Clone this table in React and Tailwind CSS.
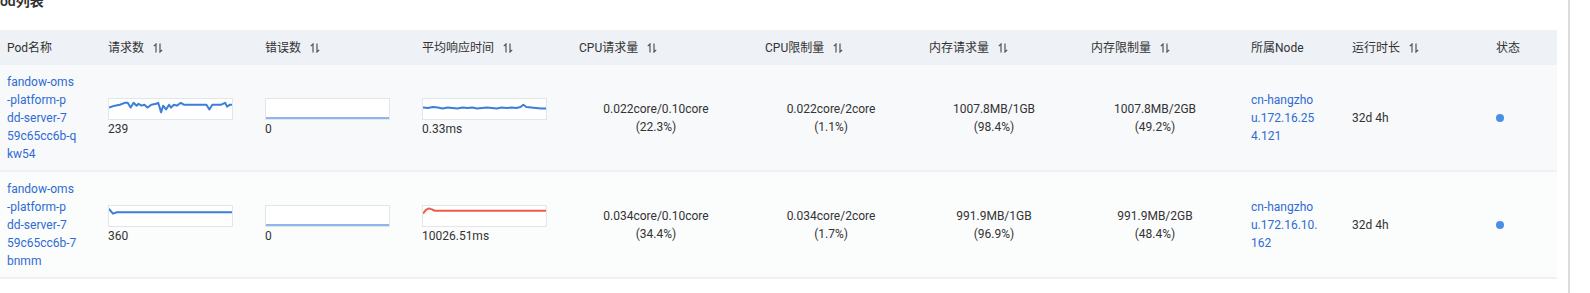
import React from "react";

const SortIcon = () => (
  <svg width="10" height="10" viewBox="0 0 10 10" className="ml-[9px] shrink-0" fill="none" stroke="#555" strokeWidth="1.2">
    <path d="M3 9.5V1L0.8 3.2" />
    <path d="M7 0.5V9L9.2 6.8" />
  </svg>
);

const Spark = ({ points, color = "#3b7fd6" }) => (
  <div className="w-[125px] h-[22px] border border-[#e3e5e8] bg-white">
    <svg width="123" height="20" viewBox="0 0 125 21" preserveAspectRatio="none" className="block">
      <polyline points={points} fill="none" stroke={color} strokeWidth="2" strokeLinejoin="round" vectorEffect="non-scaling-stroke" />
    </svg>
  </div>
);

const req1 =
  "0,9 6,7 11,6 16,4 19,4 22,9 25,4 28,7 30,5 33,7 36,6 39,9 43,6 48,5 50,4 53,14 55,7 58,11 61,6 63,9 66,6 69,7 73,4 76,6 99,6 102,11 105,6 114,6 118,4 120,8 123,6 125,6";
const resp1 =
  "0,9 5,9.5 10,8.5 15,9 20,10 25,9 30,9.5 35,10 40,9 45,9.5 50,9 55,10 60,9.5 65,9 70,9.5 75,10 80,9 85,9.5 90,9 95,9.5 99,8.5 102,6 105,8.5 110,9 115,9.5 120,10 125,10";
const req2 = "0,3 4,8 8,6.5 125,6.5";
const resp2 = "0,8 3,4 6,2.5 9,3.5 12,5 125,5";
const err = "0,20 125,20";

const cols =
  "grid grid-cols-[100px_157px_157px_157px_186px_164px_162px_160px_101px_144px_69px]";

const Head = ({ label, sort, first }) => (
  <div className={`flex items-center ${first ? "pl-[7px]" : "pl-2"}`}>
    <span>{label}</span>
    {sort && <SortIcon />}
  </div>
);

const Metric = ({ points, value, color }) => (
  <div className="pl-2 flex flex-col justify-center">
    <Spark points={points} color={color} />
    <div className="leading-[18px]">{value}</div>
  </div>
);

const Centered = ({ a, b }) => (
  <div className="pl-2 pr-6 flex flex-col justify-center items-center text-center leading-[18px]">
    <div>{a}</div>
    <div>{b}</div>
  </div>
);

const Row = ({ bg, name, node, r }) => (
  <div className={`${cols} h-[107px] ${bg} border-b-2 border-[#eef0f2] text-[12px] text-[#333]`}>
    <div className="pl-[7px] flex flex-col justify-center leading-[18px] text-[#2f6bd3]">
      {name.map((l) => (
        <div key={l} className="whitespace-nowrap">{l}</div>
      ))}
    </div>
    <Metric points={r.req} value={r.reqV} color="#3b7fd6" />
    <Metric points={err} value="0" color="#8db6ea" />
    <Metric points={r.resp} value={r.respV} color={r.respC} />
    <Centered a={r.c1a} b={r.c1b} />
    <Centered a={r.c2a} b={r.c2b} />
    <Centered a={r.m1a} b={r.m1b} />
    <Centered a={r.m2a} b={r.m2b} />
    <div className="pl-2 flex flex-col justify-center leading-[18px] text-[#2f6bd3]">
      {node.map((l) => (
        <div key={l} className="whitespace-nowrap">{l}</div>
      ))}
    </div>
    <div className="pl-2 flex items-center">32d 4h</div>
    <div className="pl-2 flex items-center">
      <span className="w-2 h-2 rounded-full bg-[#4a8fe6]" />
    </div>
  </div>
);

export default function App() {
  return (
    <div className="w-[1590px] h-[293px] bg-white overflow-hidden font-[Roboto,'Noto_Sans_CJK_SC',sans-serif]">
      <div className="w-[1570px] h-[293px] border-r-2 border-[#dcdcdc] flex flex-col">
        <div className="h-[30px] shrink-0 flex flex-col">
          <div className="-mt-[6px] -ml-[9px] text-[14px] leading-[14px] font-semibold text-[#333]">Pod列表</div>
        </div>
        <div className="w-[1557px]">
          <div className={`${cols} h-[35px] bg-[#eef1f6] text-[12px] text-[#333]`}>
            <Head label="Pod名称" first />
            <Head label="请求数" sort />
            <Head label="错误数" sort />
            <Head label="平均响应时间" sort />
            <Head label="CPU请求量" sort />
            <Head label="CPU限制量" sort />
            <Head label="内存请求量" sort />
            <Head label="内存限制量" sort />
            <Head label="所属Node" />
            <Head label="运行时长" sort />
            <Head label="状态" />
          </div>
          <Row
            bg="bg-[#f8f9fb]"
            name={["fandow-oms", "-platform-p", "dd-server-7", "59c65cc6b-q", "kw54"]}
            node={["cn-hangzho", "u.172.16.25", "4.121"]}
            r={{
              req: req1,
              reqV: "239",
              resp: resp1,
              respV: "0.33ms",
              respC: "#3b7fd6",
              c1a: "0.022core/0.10core",
              c1b: "(22.3%)",
              c2a: "0.022core/2core",
              c2b: "(1.1%)",
              m1a: "1007.8MB/1GB",
              m1b: "(98.4%)",
              m2a: "1007.8MB/2GB",
              m2b: "(49.2%)",
            }}
          />
          <Row
            bg="bg-[#fbfcfc]"
            name={["fandow-oms", "-platform-p", "dd-server-7", "59c65cc6b-7", "bnmm"]}
            node={["cn-hangzho", "u.172.16.10.", "162"]}
            r={{
              req: req2,
              reqV: "360",
              resp: resp2,
              respV: "10026.51ms",
              respC: "#ef5b4a",
              c1a: "0.034core/0.10core",
              c1b: "(34.4%)",
              c2a: "0.034core/2core",
              c2b: "(1.7%)",
              m1a: "991.9MB/1GB",
              m1b: "(96.9%)",
              m2a: "991.9MB/2GB",
              m2b: "(48.4%)",
            }}
          />
        </div>
      </div>
    </div>
  );
}
